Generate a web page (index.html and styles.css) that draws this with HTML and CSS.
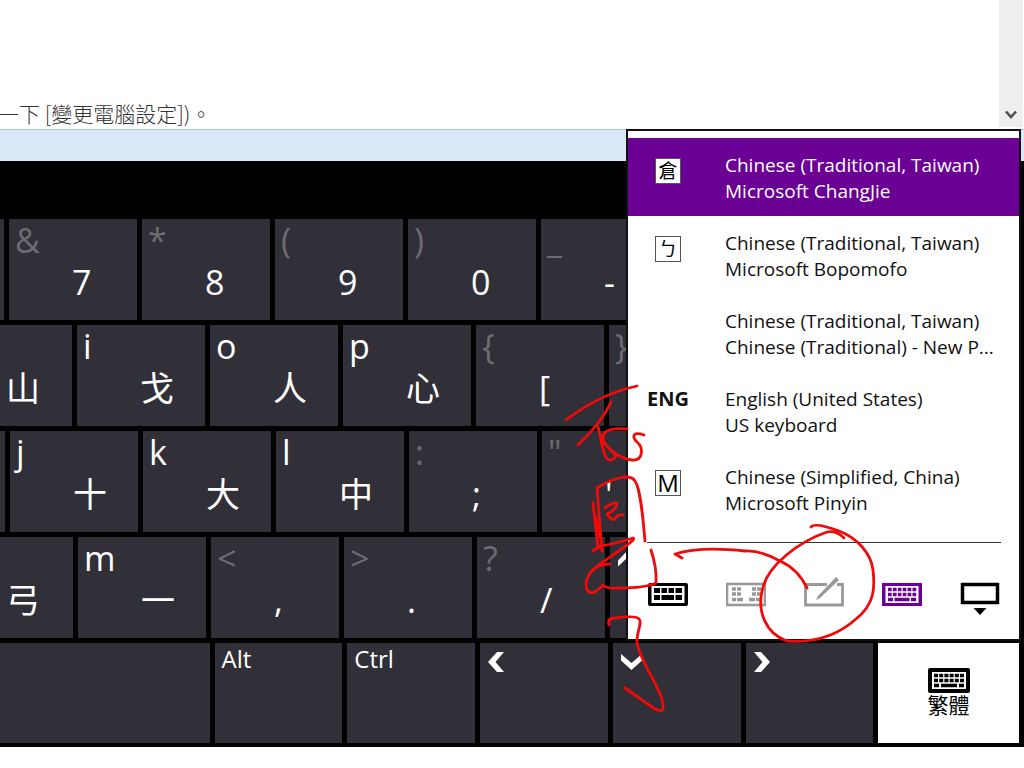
FILE: index.html
```html
<!DOCTYPE html>
<html lang="zh-Hant">
<head>
<meta charset="utf-8">
<title>Touch keyboard</title>
<link rel="stylesheet" href="styles.css">
</head>
<body>
<div class="screen">
  <main class="document">
    <p class="document-text">一下 [變更電腦設定])。</p>
    <div class="scrollbar">
      <button class="scroll-down" aria-label="Scroll down"><svg width="14" height="12" viewBox="0 0 14 12"><path d="M2 2.500 7 8 12 2.500" fill="none" stroke="#505050" stroke-width="2.600"/></svg></button>
    </div>
  </main>
  <div class="strip"></div>

  <section class="keyboard">
    <div class="row">
      <button class="key w4" aria-label="6"></button>
      <button class="key"><span class="shift dim">&amp;</span><span class="main">7</span></button>
      <button class="key"><span class="shift dim">*</span><span class="main">8</span></button>
      <button class="key"><span class="shift dim">(</span><span class="main">9</span></button>
      <button class="key"><span class="shift dim">)</span><span class="main">0</span></button>
      <button class="key"><span class="shift dim">_</span><span class="main">-</span></button>
      <button class="key w345" aria-label="Backspace"></button>
    </div>
    <div class="row">
      <button class="key w72 cut"><span class="main">山</span></button>
      <button class="key"><span class="shift">i</span><span class="main">戈</span></button>
      <button class="key"><span class="shift">o</span><span class="main">人</span></button>
      <button class="key"><span class="shift">p</span><span class="main">心</span></button>
      <button class="key"><span class="shift dim">{</span><span class="main">[</span></button>
      <button class="key"><span class="shift dim">}</span></button>
      <button class="key w277" aria-label="Backslash"></button>
    </div>
    <div class="row">
      <button class="key w5" aria-label="h"></button>
      <button class="key"><span class="shift">j</span><span class="main">十</span></button>
      <button class="key"><span class="shift">k</span><span class="main">大</span></button>
      <button class="key"><span class="shift">l</span><span class="main">中</span></button>
      <button class="key"><span class="shift dim">:</span><span class="main">;</span></button>
      <button class="key"><span class="shift dim">"</span><span class="main">'</span></button>
      <button class="key w344" aria-label="Enter"></button>
    </div>
    <div class="row">
      <button class="key w73 cut"><span class="main">弓</span></button>
      <button class="key"><span class="shift">m</span><span class="main">一</span></button>
      <button class="key"><span class="shift dim">&lt;</span><span class="main">,</span></button>
      <button class="key"><span class="shift dim">&gt;</span><span class="main">.</span></button>
      <button class="key"><span class="shift dim">?</span><span class="main">/</span></button>
      <button class="key" aria-label="Up"><svg class="arrow" width="22" height="22" viewBox="0 0 22 22"><path d="M0 15.500 11 4 22 15.500V21.500L11 11 0 21.500Z" fill="#fff"/></svg></button>
      <button class="key w276" aria-label="Shift"></button>
    </div>
    <div class="row bottom">
      <button class="key w210" aria-label="Space"></button>
      <button class="key"><span class="word">Alt</span></button>
      <button class="key"><span class="word">Ctrl</span></button>
      <button class="key" aria-label="Left"><svg class="arrow" width="22" height="22" viewBox="0 0 22 22"><path d="M9 1H16L7.500 11 16 21H9L0 11Z" fill="#fff"/></svg></button>
      <button class="key" aria-label="Down"><svg class="arrow" width="22" height="22" viewBox="0 0 22 22"><path d="M0 3 10.500 12 21 3V9.500L10.500 19 0 9.500Z" fill="#fff"/></svg></button>
      <button class="key" aria-label="Right"><svg class="arrow" width="22" height="22" viewBox="0 0 22 22"><path d="M7 1H0L8.500 11 0 21H7L16 11Z" fill="#fff"/></svg></button>
      <button class="key w141 language">
        <svg width="42" height="25" viewBox="0 0 42 25"><rect width="42" height="25" rx="2" fill="#000"/><rect x="4" y="4" width="34" height="17" fill="#fff"/><g stroke="#000" stroke-width="3.500"><path d="M6 7.500H36M6 12.500H36" stroke-dasharray="4 1.200"/><path d="M6 17.500H11M13 17.500H29M31 17.500H36"/></g></svg>
        <span>繁體</span>
      </button>
    </div>
  </section>

  <aside class="menu">
    <button class="item selected"><span class="badge"><span class="box">倉</span></span><span class="label">Chinese (Traditional, Taiwan)<br>Microsoft ChangJie</span></button>
    <button class="item"><span class="badge"><span class="box">ㄅ</span></span><span class="label">Chinese (Traditional, Taiwan)<br>Microsoft Bopomofo</span></button>
    <button class="item"><span class="badge"></span><span class="label">Chinese (Traditional, Taiwan)<br>Chinese (Traditional) - New P...</span></button>
    <button class="item"><span class="badge code">ENG</span><span class="label">English (United States)<br>US keyboard</span></button>
    <button class="item"><span class="badge"><span class="box latin">M</span></span><span class="label">Chinese (Simplified, China)<br>Microsoft Pinyin</span></button>
    <div class="tools">
      <button class="tool" aria-label="Standard keyboard"><svg width="40" height="40" viewBox="0 0 40 40"><rect y="8" width="40" height="23" rx="2" fill="#000"/><rect x="3.500" y="11" width="33" height="17" fill="#fff"/><path d="M6 15.500H12M13.500 15.500H19M20.500 15.500H26M27.500 15.500H34M6 22.500H12M13.500 22.500H26M27.500 22.500H34" stroke="#000" stroke-width="5"/></svg></button>
      <button class="tool" aria-label="Split keyboard"><svg width="40" height="40" viewBox="0 0 40 40"><rect x="1" y="9" width="38" height="21" fill="none" stroke="#999" stroke-width="2.600"/><path d="M6 14H15M6 19H15M26 14H35M26 19H35" stroke="#999" stroke-width="3.500" stroke-dasharray="4 1"/><path d="M6 24.500H10M11 24.500H17M23 24.500H29M30 24.500H35" stroke="#999" stroke-width="3.500"/></svg></button>
      <button class="tool" aria-label="Handwriting"><svg width="40" height="40" viewBox="0 0 40 40"><path d="M23 9.500H1.500V30H38.500V9.500H33" fill="none" stroke="#999" stroke-width="2.800"/><path d="M12 25 14 21 32 2 35 5 16 23Z" fill="#999"/></svg></button>
      <button class="tool" aria-label="Full keyboard"><svg width="40" height="40" viewBox="0 0 40 40"><rect y="8" width="40" height="23" fill="#6a0094"/><rect x="3.500" y="11" width="33" height="17" fill="#fff"/><g stroke="#6a0094" stroke-width="3.500"><path d="M6 14.500H34.500M6 19.500H34.500" stroke-dasharray="3.700 1.200"/><path d="M6 24.500H11M12.500 24.500H27.500M29 24.500H34"/></g></svg></button>
      <button class="tool" aria-label="Dock"><svg width="40" height="40" viewBox="0 0 40 40"><rect x="2.500" y="9.500" width="35" height="18" fill="none" stroke="#000" stroke-width="3.500"/><path d="M13.500 33H26.500L20 40Z" fill="#000"/></svg></button>
    </div>
  </aside>

  <svg class="ink" width="1024" height="768" viewBox="0 0 1024 768" fill="none" stroke="#f00a0a" stroke-width="2.800" stroke-linecap="round" stroke-linejoin="round">
    <path d="M566 420Q600 394 637 386M611 402Q602 422 578 445"/>
    <path d="M598 427C602 440 603 462 611 460C621 456 613 455 604 442C600 433 607 427 627 429M602 440C610 452 623 459 632 460C643 461 644 448 637 442C632 437 632 431 644 435"/>
    <path d="M593 503 598 548M597 488 602 551M597 488C613 478 630 473 635 481C641 490 643 520 645 541"/>
    <path d="M605 508Q616 500 617 504Q615 511 607 514Q611 521 615 519Q617 514 623 515M596 517 600 538"/>
    <path d="M593 551 600 546Q615 544 633 538C638 539 615 553 603 562C588 571 584 582 587 590C592 597 599 589 603 585Q606 589 620 588Q645 588 656 583Q657 568 651 550M589 574Q597 564 610 564"/>
    <path d="M609 625Q607 618 615 618Q637 615 639 619C643 622 636 633 637 643C640 660 656 681 662 699C665 711 663 714 652 707L625 688"/>
    <path d="M807 588Q798 569 780 561Q760 550 745 551Q700 546 675 554L682 558"/>
    <path d="M844 538Q836 530 827 532C798 542 769 565 763 587C756 611 766 634 787 641C813 643 837 636 856 619C875 604 875 587 873 570C871 553 857 538 839 531Q815 522 811 527"/>
  </svg>
</div>
</body>
</html>
```
FILE: styles.css
```css
* { box-sizing: border-box; }

body {
  margin: 0;
  background: #fff;
  font-family: "Open Sans", "Noto Sans CJK TC", sans-serif;
  color: #111;
}

button {
  margin: 0;
  padding: 0;
  border: 0;
  background: none;
  font: inherit;
  color: inherit;
  text-align: left;
}

svg { display: block; }

.screen {
  position: relative;
  overflow: hidden;
  padding-bottom: 21px;
}

.document {
  display: flex;
  justify-content: space-between;
  height: 129px;
}

.document-text {
  margin: 0 0 0 -2px;
  padding-top: 97px;
  font-family: "Noto Sans CJK TC", sans-serif;
  font-size: 21px;
  font-weight: 300;
  line-height: 32px;
  white-space: nowrap;
  color: #333;
}

.scrollbar {
  display: flex;
  align-items: flex-end;
  justify-content: center;
  width: 24px;
  margin: 0 1px 2px 0;
  background: #eee;
}

.scroll-down { padding-bottom: 6px; }

.strip {
  height: 32px;
  border-top: 1px solid #b9c8d8;
  background: #dae8f7;
}

.keyboard {
  display: flex;
  flex-direction: column;
  gap: 5px;
  padding: 58px 5px 4px 0;
  background: #000;
}

.row {
  display: flex;
  gap: 5px;
}

.key {
  display: flex;
  flex: 128 1 0;
  flex-direction: column;
  align-items: flex-start;
  min-width: 0;
  height: 101px;
  background: #312f37;
  color: #fff;
  font-size: 34px;
  line-height: 34px;
}

.bottom .key { height: 100px; }

.w4 { flex-grow: 4; }
.w5 { flex-grow: 5; }
.w72 { flex-grow: 72; }
.w73 { flex-grow: 73; }
.w141 { flex-grow: 141; }
.w210 { flex-grow: 210; }
.w276 { flex-grow: 276; }
.w277 { flex-grow: 277; }
.w344 { flex-grow: 344; }
.w345 { flex-grow: 345; }

.shift { margin: 4px 0 0 6px; }
.dim { color: #6d6c71; }
.main { margin: 8px 0 0 63px; }
.cut .main { margin: 46px 0 0 6px; }

.word {
  margin: 1px 0 0 7px;
  font-size: 24px;
  line-height: 30px;
}

.arrow { margin: 8px 0 0 8px; }

.language {
  align-items: center;
  justify-content: center;
  background: #fff;
  color: #000;
  font-size: 21px;
  line-height: 25px;
}

.menu {
  position: absolute;
  top: 129px;
  right: 3px;
  width: 395px;
  padding-top: 7px;
  border: 2px solid #111;
  background: #fff;
}

.item {
  display: flex;
  width: 100%;
  height: 78px;
  font-size: 19px;
  line-height: 26px;
}

.selected {
  background: #6a0094;
  color: #fff;
}

.badge {
  display: flex;
  justify-content: center;
  width: 80px;
  padding-top: 20px;
}

.code {
  padding-top: 14px;
  font-size: 20px;
  font-weight: 700;
}

.box {
  display: flex;
  align-items: center;
  justify-content: center;
  width: 26px;
  height: 26px;
  border: 1px solid #555;
  background: #fff;
  color: #000;
  line-height: 24px;
}

.latin { font-size: 24px; }

.label {
  padding: 14px 0 0 17px;
  white-space: nowrap;
}

.tools {
  display: flex;
  justify-content: space-between;
  margin: 14px 18px 0 19px;
  padding: 32px 1px 24px;
  border-top: 1px solid #333;
}

.ink {
  position: absolute;
  top: 0;
  left: 0;
  pointer-events: none;
}
```
